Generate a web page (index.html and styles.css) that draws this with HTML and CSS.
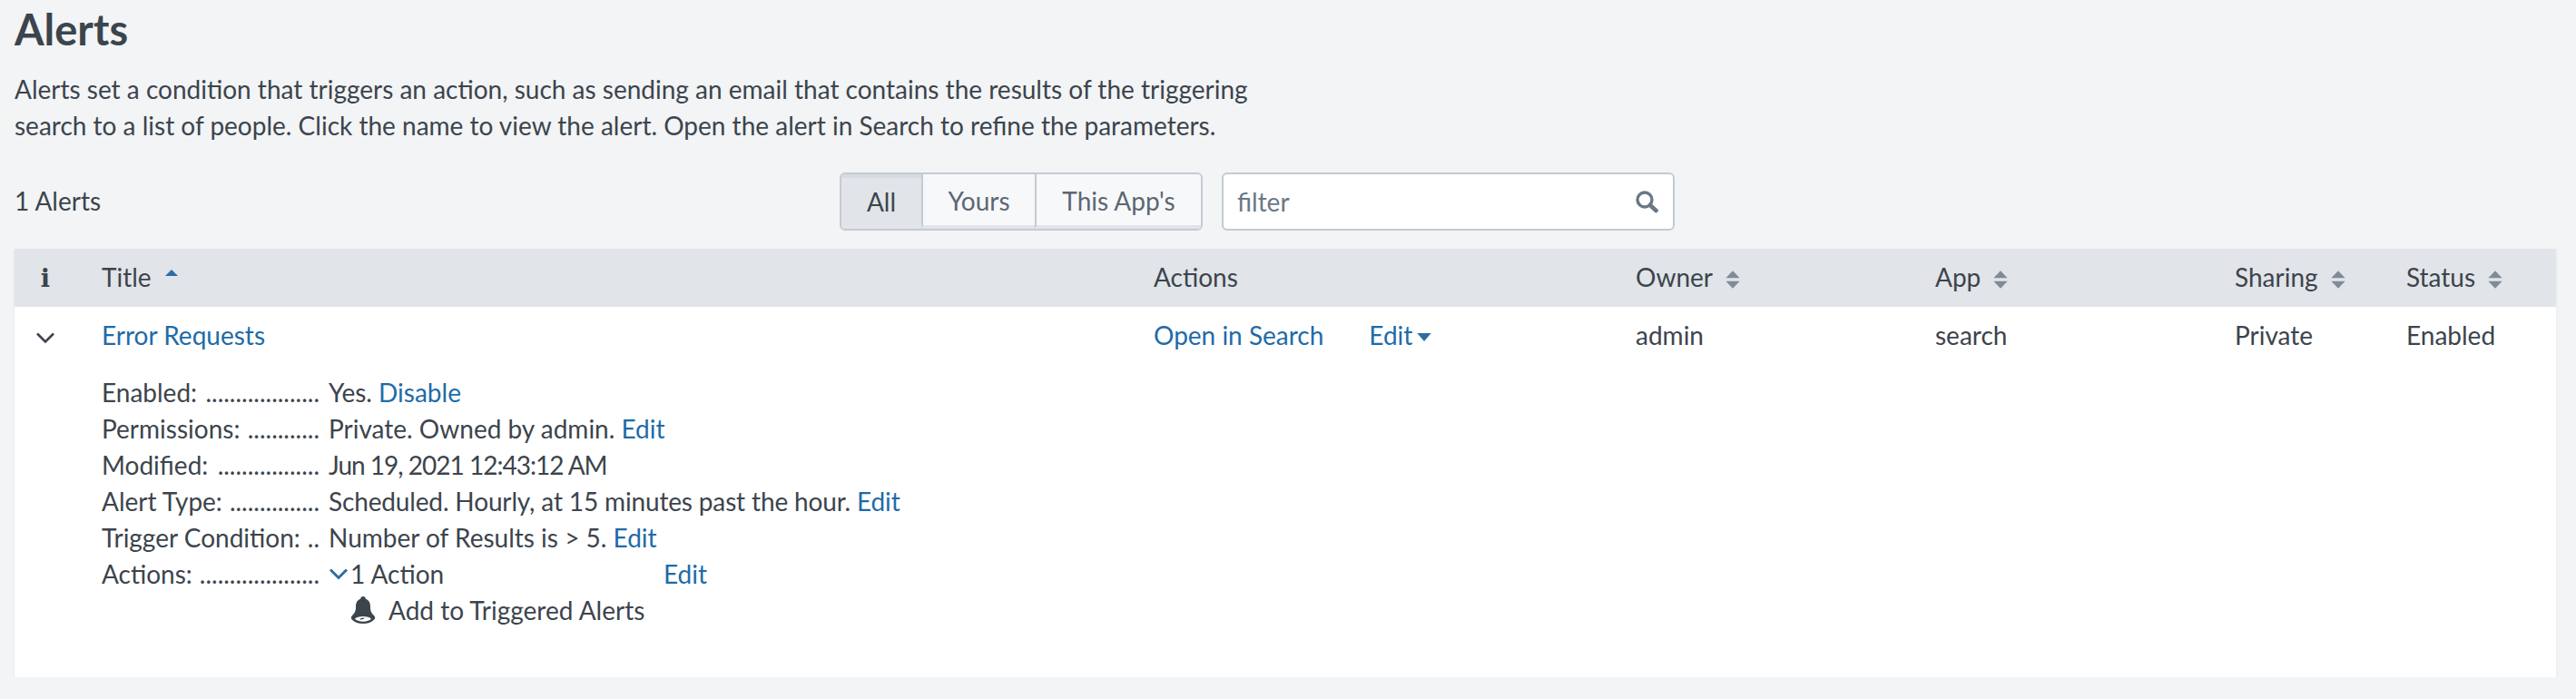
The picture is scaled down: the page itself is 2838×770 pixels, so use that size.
FILE: index.html

```html
<!DOCTYPE html>
<html>
<head>
  <meta charset="UTF-8">
  <title>Alerts</title>
  <link rel="stylesheet" href="styles.css">
</head>
<body>

<h1 class="page-title">Alerts</h1>
<p class="page-desc">Alerts set a condition that triggers an action, such as sending an email that contains the results of the triggering<br>search to a list of people. Click the name to view the alert. Open the alert in Search to refine the parameters.</p>

<div class="toolbar">
  <div class="count">1 Alerts</div>
  <div class="btn-group">
    <button class="btn btn-active">All</button>
    <button class="btn btn-yours">Yours</button>
    <button class="btn btn-app">This App's</button>
  </div>
  <div class="filter">
    <span class="filter-text">filter</span>
    <svg class="filter-icon" width="26" height="26" viewBox="0 0 26 26">
      <circle cx="11" cy="11" r="8" fill="none" stroke="#6b7785" stroke-width="3.4"/>
      <path d="M17 17l6.5 6" stroke="#6b7785" stroke-width="4.6" stroke-linecap="round"/>
    </svg>
  </div>
</div>

<table class="alerts">
  <thead>
    <tr>
      <th class="col-info"><span class="info-i">i</span></th>
      <th class="col-title">Title <svg class="sort sort-up" width="18" height="22" viewBox="0 0 16 22"><path d="M1 9L8 2l7 7z" fill="#2e6da4"/></svg></th>
      <th class="col-actions">Actions</th>
      <th class="col-owner">Owner <svg class="sort" width="18" height="24" viewBox="0 0 16 22"><path d="M1 9.500L8 2l7 7.500z" fill="#7f8b98"/><path d="M1 12.500L8 20l7-7.500z" fill="#7f8b98"/></svg></th>
      <th class="col-app">App <svg class="sort" width="18" height="24" viewBox="0 0 16 22"><path d="M1 9.500L8 2l7 7.500z" fill="#7f8b98"/><path d="M1 12.500L8 20l7-7.500z" fill="#7f8b98"/></svg></th>
      <th class="col-sharing">Sharing <svg class="sort" width="18" height="24" viewBox="0 0 16 22"><path d="M1 9.500L8 2l7 7.500z" fill="#7f8b98"/><path d="M1 12.500L8 20l7-7.500z" fill="#7f8b98"/></svg></th>
      <th class="col-status">Status <svg class="sort" width="18" height="24" viewBox="0 0 16 22"><path d="M1 9.500L8 2l7 7.500z" fill="#7f8b98"/><path d="M1 12.500L8 20l7-7.500z" fill="#7f8b98"/></svg></th>
    </tr>
  </thead>
  <tbody>
    <tr>
      <td class="col-info">
        <svg class="chev" width="22" height="14" viewBox="0 0 22 14"><path d="M2 2.500l9 9 9-9" fill="none" stroke="#3c444d" stroke-width="2.600"/></svg>
      </td>
      <td>
        <a href="#">Error Requests</a>
        <dl class="details">
          <div class="detail"><dt><span>Enabled:</span><span class="dots">...................</span></dt><dd>Yes. <a href="#">Disable</a></dd></div>
          <div class="detail"><dt><span>Permissions:</span><span class="dots">............</span></dt><dd>Private. Owned by admin. <a href="#">Edit</a></dd></div>
          <div class="detail"><dt><span>Modified:</span><span class="dots">.................</span></dt><dd class="date">Jun 19, 2021 12:43:12 AM</dd></div>
          <div class="detail"><dt><span>Alert Type:</span><span class="dots">...............</span></dt><dd class="schedule">Scheduled. Hourly, at 15 minutes past the hour. <a href="#">Edit</a></dd></div>
          <div class="detail"><dt><span>Trigger Condition:</span><span class="dots">..</span></dt><dd>Number of Results is &gt; 5. <a href="#">Edit</a></dd></div>
          <div class="detail"><dt><span>Actions:</span><span class="dots">....................</span></dt>
            <dd class="action-line">
              <svg class="chev-blue" width="22" height="14" viewBox="0 0 22 14"><path d="M2 2.500l9 9 9-9" fill="none" stroke="#2e6da4" stroke-width="3"/></svg><span class="action-count">1 Action</span><a href="#">Edit</a>
            </dd>
          </div>
          <div class="detail"><dt></dt>
            <dd class="action-item">
              <svg class="bell" width="28" height="30" viewBox="0 0 28 32" preserveAspectRatio="none"><path d="M14 0c1.800 0 2.800 1.200 2.800 3 4 1.500 5.200 5 5.200 9 0 5 .8 7 4 10.500 1.500 2 1.500 3.500 0 5-2.500 3-7 4.500-12 4.500S4.500 30.500 2 27.500c-1.500-1.500-1.500-3 0-5C5.200 19 6 17 6 12c0-4 1.200-7.500 5.200-9C11.200 1.200 12.200 0 14 0z" fill="#3c444d"/><path d="M5 26.500c1.500-2 5-3 9-3s7.500 1 9 3c-1.500 2-5 3-9 3s-7.500-1-9-3z" fill="#fff"/><path d="M10 27c1-1.500 3-2 5.500-2-.5 1.500-2.500 2.500-5.500 2z" fill="#3c444d"/></svg>
              Add to Triggered Alerts
            </dd>
          </div>
        </dl>
      </td>
      <td class="row-actions"><a href="#">Open in Search</a><a class="edit-menu" href="#">Edit <svg class="edit-caret" width="16" height="11" viewBox="0 0 14 10"><path d="M0 1h14L7 9z" fill="#2e6da4"/></svg></a></td>
      <td>admin</td>
      <td>search</td>
      <td>Private</td>
      <td>Enabled</td>
    </tr>
  </tbody>
</table>

</body>
</html>
```

FILE: styles.css

```css
body {
  margin: 0;
  padding: 0 22px 0 16px;
  background-color: #f2f4f5;
  color: #3c444d;
  font-family: Lato, "Liberation Sans", sans-serif;
  font-size: 28px;
  line-height: 40px;
}
a {
  color: #1e6ba8;
  text-decoration: none;
}
.page-title {
  margin: 0;
  padding-top: 5px;
  font-size: 47px;
  line-height: 54px;
  font-weight: 700;
}
.page-desc {
  margin: 19px 0 0;
}
.toolbar {
  display: flex;
  align-items: center;
  margin-top: 32px;
  height: 64px;
}
.count {
  width: 909px;
  padding-bottom: 2px;
}
.btn-group {
  display: flex;
  width: 400px;
  height: 64px;
  border: 2px solid #c3cbd4;
  border-radius: 6px;
  box-sizing: border-box;
  overflow: hidden;
}
.btn {
  padding: 2px 0 0;
  border: none;
  border-left: 2px solid #c3cbd4;
  border-bottom: 4px solid #e1e4e8;
  background: #f7f8fa;
  color: #5c6773;
  font: inherit;
}
.btn-active {
  width: 88px;
  padding: 0 0 4px;
  border-left: none;
  border-bottom: none;
  border-top: 4px solid #d6dae0;
  background: #e1e4e8;
  color: #3c444d;
}
.btn-yours { width: 125px; }
.btn-app { flex: 1; }
.filter {
  display: flex;
  align-items: center;
  justify-content: space-between;
  box-sizing: border-box;
  width: 499px;
  height: 64px;
  margin-left: 21px;
  padding: 0 16px 0 15px;
  background: #fff;
  border: 2px solid #c3cbd4;
  border-radius: 6px;
  color: #6b7785;
}
.alerts {
  width: 100%;
  margin-top: 20px;
  border-collapse: collapse;
  table-layout: fixed;
  background: #fff;
  box-shadow: 0 2px 3px #e1e4e8;
}
.alerts th {
  height: 62px;
  padding: 0 16px 2px;
  background: #e1e4e8;
  font-weight: 400;
  text-align: left;
  white-space: nowrap;
}
.alerts td {
  height: 397px;
  padding: 11px 16px 0;
  vertical-align: top;
  white-space: nowrap;
}
.alerts td.col-info, .alerts th.col-info {
  padding: 0 12px 0 0;
  text-align: center;
}
.alerts td.col-info {
  padding-top: 11px;
}
.col-info { width: 68px; }
.col-title { width: 1127px; }
.col-actions { width: 499px; }
.col-owner { width: 298px; }
.col-app { width: 298px; }
.col-sharing { width: 157px; }
.col-status { width: auto; }
.info-i {
  font-family: "DejaVu Serif", serif;
  font-weight: 700;
  font-size: 27px;
}
.sort {
  margin-left: 6px;
  vertical-align: -4px;
}
.sort-up {
  vertical-align: -1px;
}
.chev {
  vertical-align: 1px;
}
.details {
  margin: 23px 0 0;
}
.detail {
  display: flex;
  height: 40px;
}
.detail dt {
  display: flex;
  justify-content: space-between;
  width: 240px;
  margin-right: 10px;
  white-space: nowrap;
}
.detail dd {
  margin: 0;
}
.date {
  letter-spacing: -1px;
}
.schedule {
  letter-spacing: -0.15px;
}
.action-line {
  display: flex;
  align-items: center;
}
.chev-blue {
  margin-right: 2px;
}
.action-count {
  width: 345px;
}
.action-item {
  display: flex;
  align-items: center;
  gap: 14px;
  margin-left: 24px !important;
}
.edit-menu {
  margin-left: 50px;
}
.edit-caret {
  margin-left: -3px;
  vertical-align: 3px;
}
```
